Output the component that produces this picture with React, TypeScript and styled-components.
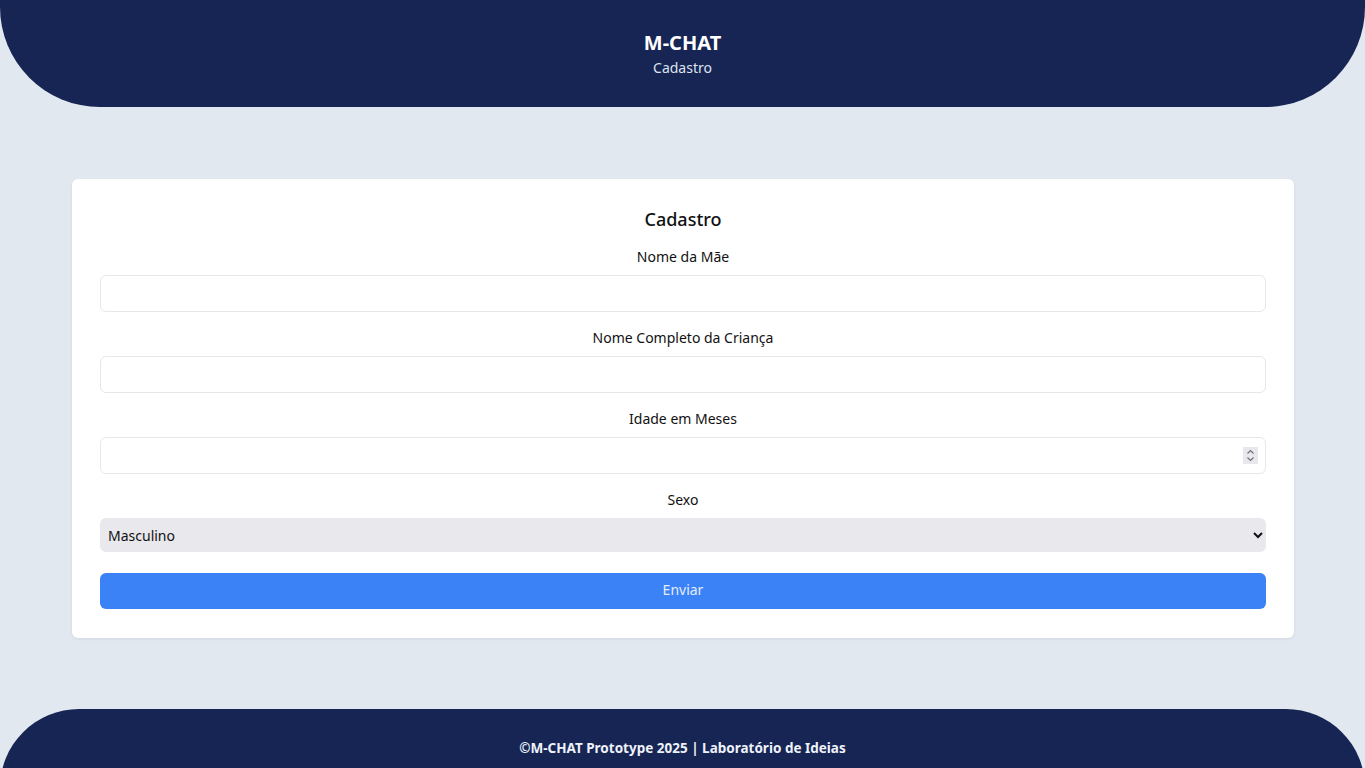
import React, {useState} from 'react';
import styled, {createGlobalStyle} from 'styled-components';

const GlobalStyle = createGlobalStyle`
  * { box-sizing: border-box; }
  body {
    margin: 0;
    background: #e2e8f0;
    font-family: "Noto Sans", "Open Sans", sans-serif;
    color: #111;
  }
`;

const Header = styled.header`
  background: #172554;
  color: white;
  text-align: center;
  padding: 29px 0 30px;
  border-radius: 0 0 100px 100px;
`;

const Brand = styled.h1`
  margin: 0;
  font-size: 20px;
  line-height: 28px;
  font-weight: 700;
`;

const Subtitle = styled.p`
  margin: 0;
  padding-top: 1px;
  font-size: 14px;
  line-height: 19px;
  color: #dde3ef;
`;

const Main = styled.main`
  padding: 72px 71px 71px 72px;
`;

const Card = styled.form`
  background: white;
  border-radius: 6px;
  padding: 28px 28px 29px;
  box-shadow: 0 1px 3px rgba(15, 23, 42, 0.08);
`;

const Title = styled.h2`
  margin: 0 0 16px;
  text-align: center;
  font-size: 18px;
  line-height: 24px;
  font-weight: 500;
`;

const Field = styled.div`
  margin-bottom: 16px;
`;

const Label = styled.label`
  display: block;
  text-align: center;
  font-size: 14px;
  line-height: 20px;
  font-weight: 400;
  margin-bottom: 8px;
`;

const InputWrap = styled.div`
  position: relative;
`;

const Input = styled.input`
  display: block;
  width: 100%;
  height: 37px;
  border: 1px solid #e5e7eb;
  border-radius: 6px;
  padding: 0 10px;
  font: inherit;
  font-size: 14px;
  outline: none;

  &::-webkit-inner-spin-button,
  &::-webkit-outer-spin-button {
    -webkit-appearance: none;
    margin: 0;
  }
`;

const Spinner = styled.span`
  position: absolute;
  right: 8px;
  top: 10px;
  width: 15px;
  height: 17px;
  background: #e8e8ec;
  display: flex;
  align-items: center;
  justify-content: center;
  pointer-events: none;
`;

const Select = styled.select`
  display: block;
  width: 100%;
  height: 34px;
  border: none;
  border-radius: 6px;
  background: #e9e8ed;
  padding: 0 4px;
  font: inherit;
  font-size: 14px;
  color: #111;
  margin-bottom: 21px;
`;

const Button = styled.button`
  display: block;
  width: 100%;
  height: 36px;
  border: none;
  border-radius: 6px;
  background: #3b82f6;
  color: #e3edff;
  font: inherit;
  font-size: 14px;
  line-height: 34px;
  padding: 0 0 2px;
  cursor: pointer;
`;

const Footer = styled.footer`
  background: #172554;
  color: #eef2fa;
  text-align: center;
  padding: 29px 0 30px;
  border-radius: 100px 100px 0 0;
  font-size: 13.5px;
  line-height: 20px;
  font-weight: 700;
`;

function App() {
  const [sexo, setSexo] = useState('Masculino');

  return (
    <>
      <GlobalStyle/>
      <Header>
        <Brand>M-CHAT</Brand>
        <Subtitle>Cadastro</Subtitle>
      </Header>

      <Main>
        <Card onSubmit={e => e.preventDefault()}>
          <Title>Cadastro</Title>
          <Field>
            <Label>Nome da Mãe</Label>
            <Input type="text"/>
          </Field>
          <Field>
            <Label>Nome Completo da Criança</Label>
            <Input type="text"/>
          </Field>
          <Field>
            <Label>Idade em Meses</Label>
            <InputWrap>
              <Input type="number"/>
              <Spinner>
                <svg width="9" height="13" viewBox="0 0 9 13" fill="none"
                     stroke="#70707a" strokeWidth="1.2">
                  <path d="M1.5 4.5 L4.5 1.5 L7.5 4.5"/>
                  <path d="M1.5 8.5 L4.5 11.5 L7.5 8.5"/>
                </svg>
              </Spinner>
            </InputWrap>
          </Field>
          <Label>Sexo</Label>
          <Select value={sexo} onChange={e => setSexo(e.target.value)}>
            <option>Masculino</option>
            <option>Feminino</option>
          </Select>
          <Button type="submit">Enviar</Button>
        </Card>
      </Main>

      <Footer>©M-CHAT Prototype 2025 | Laboratório de Ideias</Footer>
    </>
  );
}

export default App;
